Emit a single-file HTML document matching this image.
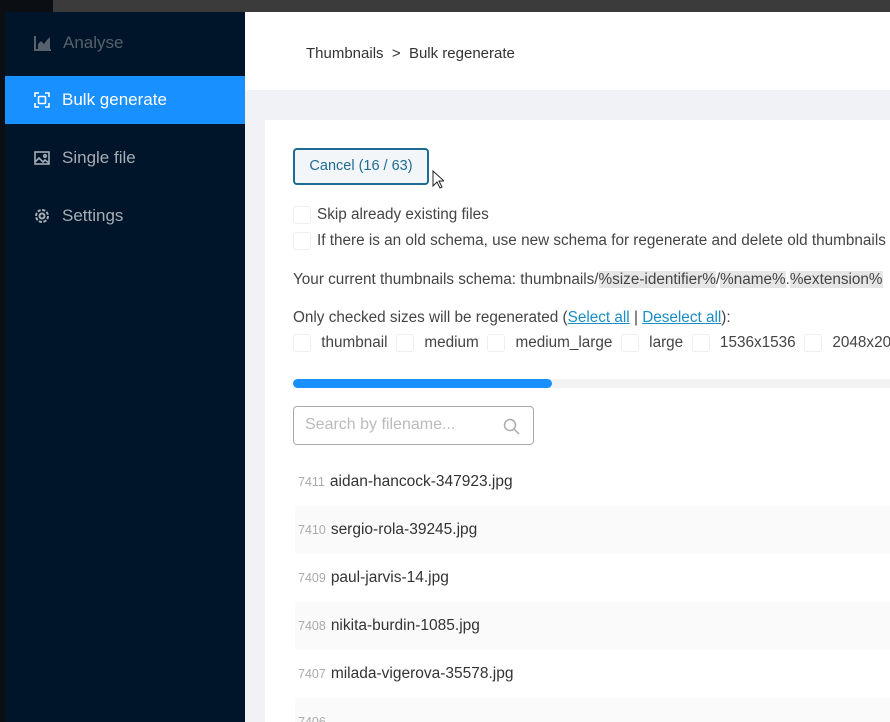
<!DOCTYPE html>
<html><head><style>
*{margin:0;padding:0;box-sizing:border-box}
html,body{width:890px;height:722px;overflow:hidden}
body{background:#0b0f14;font-family:"Liberation Sans",sans-serif;position:relative}
.top{position:absolute;left:53px;top:0;width:837px;height:12px;background:#3b3b3b}
.side{position:absolute;left:5px;top:12px;width:240px;height:710px;background:#001529}
.item{position:absolute;left:0;width:240px;height:48px;color:#a6adb4;font-size:17px;display:flex;align-items:center;padding-left:29px}
.item svg{margin-right:12px}
.item.act{background:#1890ff;color:#fff}
.main{position:absolute;left:245px;top:12px;width:645px;height:710px;background:#f0f2f5;overflow:hidden}
.hdr{position:absolute;left:0;top:0;width:645px;height:78px;background:#fff;font-size:15px;color:#333;padding:33px 0 0 61px}
.card{position:absolute;left:20px;top:108px;width:625px;height:602px;background:#fff;font-size:15.3px;color:#444;overflow:hidden}
.btn{position:absolute;left:28px;top:28px;width:136px;height:37px;border:2px solid #1e6b95;border-radius:4px;background:#f3f6f8;color:#1e6b95;font-size:14.5px;text-align:center;line-height:33px}
.cb{display:inline-block;width:18px;height:18px;border:1px solid #eee;border-radius:3px;vertical-align:middle;margin-right:6px}
.line{position:absolute;left:28px;white-space:nowrap}
.hl{background:#e6e6e6}
a{color:#1a8ec4;text-decoration:underline}
.prog{position:absolute;left:28px;top:259px;width:600px;height:9px;background:#f2f2f2;border-radius:5px}
.prog div{width:259px;height:9px;background:#1890ff;border-radius:5px}
.search{position:absolute;left:28px;top:286px;width:241px;height:39px;border:1px solid #aaa;border-radius:4px;color:#bbb;font-size:16px;padding:9px 0 0 11px}
.row{position:absolute;left:30px;width:600px;height:48px;font-size:15.5px;color:#333;display:flex;align-items:center;padding-left:3px}
.row span{color:#aaa;font-size:12.5px;margin-right:5px}
.row.alt{background:#fafafa}
</style></head><body>
<div class="top"></div>
<div class="side">
 <div class="item" style="top:7px;color:#56616c"><svg width="17" height="15" viewBox="0 0 17 15"><path d="M1 0v14h16" stroke="#56616c" stroke-width="2" fill="none"/><path d="M4 13V8l3-3 3 3 3-4 3-3v12z" fill="#56616c"/></svg>Analyse</div>
 <div class="item act" style="top:64px"><svg width="16" height="16" viewBox="0 0 16 16" fill="none" stroke="#fff" stroke-width="1.6"><path d="M1 5V1h4M11 1h4v4M15 11v4h-4M5 15H1v-4"/><rect x="4.5" y="4.5" width="7" height="7" rx="1"/></svg>Bulk generate</div>
 <div class="item" style="top:122px"><svg width="16" height="14" viewBox="0 0 16 14" fill="none" stroke="#a6adb4" stroke-width="1.6"><rect x="1" y="1" width="14" height="12"/><path d="M1 11l4-4 4 4 2-2 4 3"/><circle cx="11" cy="5" r="1.3"/></svg>Single file</div>
 <div class="item" style="top:180px"><svg width="16" height="16" viewBox="0 0 16 16" fill="none" stroke="#a6adb4" stroke-width="2"><circle cx="8" cy="8" r="6" stroke-dasharray="3.2 1.5"/><circle cx="8" cy="8" r="2.5"/></svg>Settings</div>
</div>
<div class="main">
 <div class="hdr">Thumbnails &nbsp;&gt;&nbsp; Bulk regenerate</div>
 <div class="card">
  <div class="btn">Cancel (16 / 63)</div>
  <svg style="position:absolute;left:167px;top:50px" width="12" height="19" viewBox="0 0 12 19"><path d="M1 1v15l4-4 3 6 2-1-3-6h5z" fill="#fff" stroke="#222"/></svg>
  <div class="line" style="top:86px"><span class="cb"></span>Skip already existing files</div>
  <div class="line" style="top:112px"><span class="cb"></span>If there is an old schema, use new schema for regenerate and delete old thumbnails</div>
  <div class="line" style="top:151px">Your current thumbnails schema: thumbnails/<span class="hl">%size-identifier%</span>/<span class="hl">%name%</span>.<span class="hl">%extension%</span></div>
  <div class="line" style="top:189px">Only checked sizes will be regenerated (<a>Select all</a> | <a>Deselect all</a>):</div>
  <div class="line" style="top:214px"><span class="cb"></span> thumbnail &nbsp;<span class="cb"></span> medium &nbsp;<span class="cb"></span> medium_large &nbsp;<span class="cb"></span> large &nbsp;<span class="cb"></span> 1536x1536 &nbsp;<span class="cb"></span> 2048x2048</div>
  <div class="prog"><div></div></div>
  <div class="search">Search by filename...<svg style="position:absolute;right:13px;top:11px" width="17" height="17" viewBox="0 0 17 17" fill="none" stroke="#aaa" stroke-width="1.5"><circle cx="7" cy="7" r="5.5"/><path d="M11 11l5 5"/></svg></div>
  <div class="row" style="top:338px"><span>7411</span>aidan-hancock-347923.jpg</div>
  <div class="row alt" style="top:386px"><span>7410</span>sergio-rola-39245.jpg</div>
  <div class="row" style="top:434px"><span>7409</span>paul-jarvis-14.jpg</div>
  <div class="row alt" style="top:482px"><span>7408</span>nikita-burdin-1085.jpg</div>
  <div class="row" style="top:530px"><span>7407</span>milada-vigerova-35578.jpg</div>
  <div class="row alt" style="top:578px"><span>7406</span>....</div>
 </div>
</div>
</body></html>
